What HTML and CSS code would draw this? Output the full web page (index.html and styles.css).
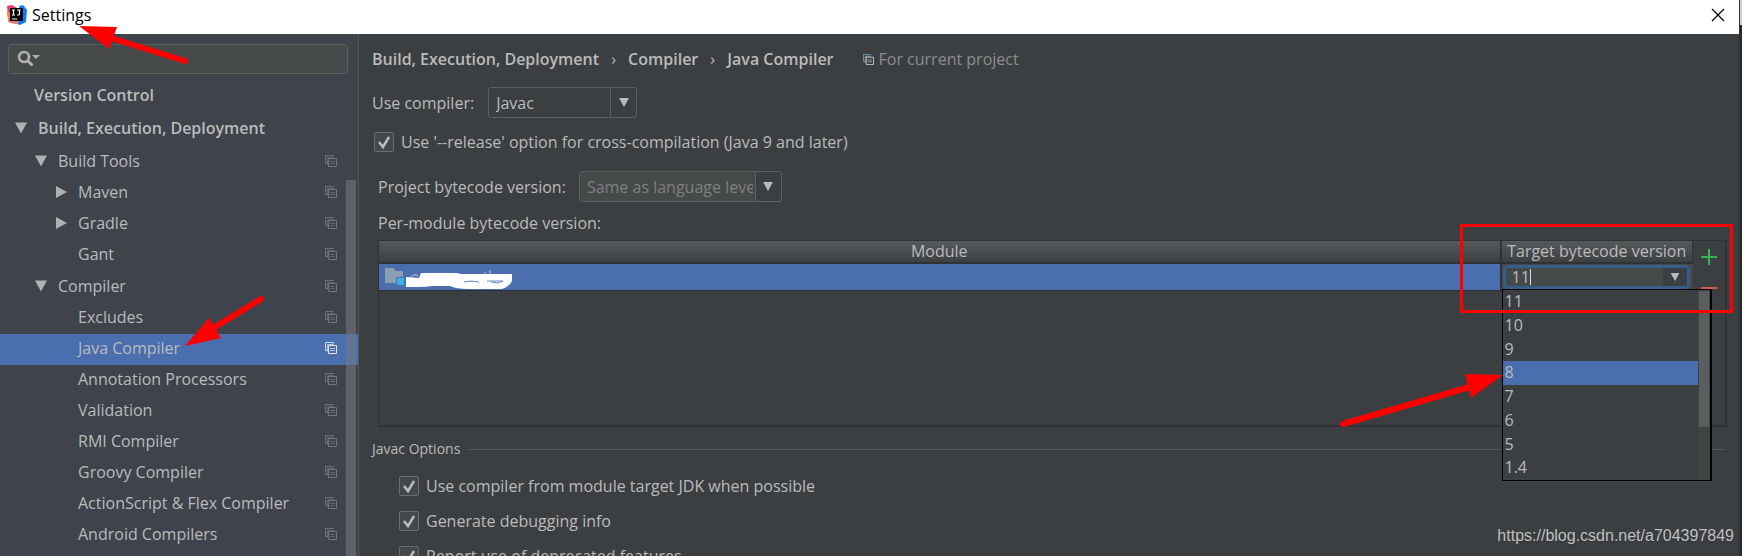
FILE: index.html
```html
<!DOCTYPE html>
<html lang="en">
<head>
<meta charset="utf-8">
<title>Settings</title>
<link rel="stylesheet" href="styles.css">
</head>
<body>
<svg class="defs" aria-hidden="true">
  <symbol id="copy" viewBox="0 0 12 12"><path d="M2.5 8.5H.5V.5h8v1" fill="none" stroke="var(--back)"/><path d="M3.5 3.5h8v8h-8z" fill="none" stroke="currentColor"/><path d="M2.5 2.5v7M2.5 2.5h6M5 6.5h5M5 8.5h5" stroke="currentColor" stroke-opacity=".7"/></symbol>
  <symbol id="down" viewBox="0 0 12 11"><path d="M0 0h12L6 11z" fill="currentColor"/></symbol>
  <symbol id="right" viewBox="0 0 12 12"><path d="M1 0l11 6-11 6z" fill="currentColor"/></symbol>
</svg>
<div class="screen">
  <div class="window">
    <header class="titlebar">
      <svg class="logo" viewBox="0 0 20 20" aria-hidden="true">
        <path d="M1 1l9 2-2 16-7-2 1-5-2-3z" fill="#f7577c"/><path d="M0 8l5-1v7l-4 1z" fill="#f98a3c"/><path d="M0 1l5-1 5 3v4H1z" fill="#ec3b6b"/>
        <path d="M12 1l4-1 4 5-1 12-6 3-6-2 7-4z" fill="#087cfa"/><path d="M2 17l2-2h8l-1 4z" fill="#fa7a62"/>
        <path d="M3 3h13v13H3z" fill="#000"/><path d="M5 5h3M6.500 5v5M5 10h3M10 5h3.500M12.500 5v4q0 1-1 1H10M5 14h5" fill="none" stroke="#fff" stroke-width="1.200"/>
      </svg>
      <h1 class="title">Settings</h1>
      <button class="close" aria-label="Close"><svg viewBox="0 0 12 12"><path d="M0 0l12 12M12 0L0 12" stroke="#000" stroke-width="1.200"/></svg></button>
    </header>
    <div class="body">
      <nav class="sidebar" aria-label="Settings sections">
        <div class="search">
          <svg class="lens" viewBox="0 0 24 16" aria-hidden="true"><circle cx="7" cy="7" r="5" fill="none" stroke="currentColor" stroke-width="2.600"/><path d="M10.500 10.500l5 5" stroke="currentColor" stroke-width="3"/><path d="M15 5h8l-4 4z" fill="currentColor"/></svg>
          <input class="search-input" type="text" aria-label="Search settings">
        </div>
        <ul class="tree">
          <li class="row top plain">Version Control</li>
          <li class="row top"><svg class="arrow"><use href="#down"/></svg>Build, Execution, Deployment</li>
          <li class="row group"><svg class="arrow"><use href="#down"/></svg>Build Tools<svg class="copy"><use href="#copy"/></svg></li>
          <li class="row leaf"><svg class="arrow"><use href="#right"/></svg>Maven<svg class="copy"><use href="#copy"/></svg></li>
          <li class="row leaf"><svg class="arrow"><use href="#right"/></svg>Gradle<svg class="copy"><use href="#copy"/></svg></li>
          <li class="row leaf plain">Gant<svg class="copy"><use href="#copy"/></svg></li>
          <li class="row group"><svg class="arrow"><use href="#down"/></svg>Compiler<svg class="copy"><use href="#copy"/></svg></li>
          <li class="row leaf plain">Excludes<svg class="copy"><use href="#copy"/></svg></li>
          <li class="row leaf plain selected">Java Compiler<svg class="copy"><use href="#copy"/></svg></li>
          <li class="row leaf plain">Annotation Processors<svg class="copy"><use href="#copy"/></svg></li>
          <li class="row leaf plain">Validation<svg class="copy"><use href="#copy"/></svg></li>
          <li class="row leaf plain">RMI Compiler<svg class="copy"><use href="#copy"/></svg></li>
          <li class="row leaf plain">Groovy Compiler<svg class="copy"><use href="#copy"/></svg></li>
          <li class="row leaf plain">ActionScript &amp; Flex Compiler<svg class="copy"><use href="#copy"/></svg></li>
          <li class="row leaf plain">Android Compilers<svg class="copy"><use href="#copy"/></svg></li>
        </ul>
        <div class="tree-thumb"></div>
      </nav>
      <main class="content">
        <div class="crumbs">
          <span>Build, Execution, Deployment</span><span class="sep">›</span><span>Compiler</span><span class="sep">›</span><span>Java Compiler</span>
          <span class="scope"><svg class="copy"><use href="#copy"/></svg>For current project</span>
        </div>
        <div class="field compiler">
          <label for="compiler">Use compiler:</label>
          <div class="combo"><select id="compiler"><option>Javac</option></select><span class="combo-button"><svg><use href="#down"/></svg></span></div>
        </div>
        <label class="check release"><input type="checkbox" checked>Use '--release' option for cross-compilation (Java 9 and later)</label>
        <div class="field bytecode">
          <label for="bytecode">Project bytecode version:</label>
          <div class="combo wide"><input id="bytecode" type="text" placeholder="Same as language level"><span class="combo-button"><svg><use href="#down"/></svg></span></div>
        </div>
        <p class="caption">Per-module bytecode version:</p>
        <div class="modules">
          <table class="grid">
            <thead><tr><th>Module</th><th class="target">Target bytecode version</th></tr></thead>
            <tbody><tr>
              <td class="module"><svg class="folder" viewBox="0 0 128 26" aria-hidden="true"><path d="M0 4h8l3 3h7v12H0z" fill="#8c9eb3"/><path d="M11 13h9v9h-9z" fill="#4b6eaf"/><path d="M12 14h7v7h-7z" fill="#40b0e0"/><path d="M26 13q3-4 7-1M99 9h2M104 7h1v4" fill="none" stroke="#c5cad2"/><path d="M21 13l13 1 2-5h36l4 1h51v7q-3 6-10 8H84q-13 0-19-3H48q-7 1-15 1H21z" fill="#fff"/><path d="M79 18l7-1 8 1M102 17h16l-5 2-7-1" fill="none" stroke="#6c87b9"/></svg></td>
              <td class="editor"><div class="cell-combo"><input type="text" value="11" aria-label="Target bytecode version"><span class="caret"></span><button aria-label="Show versions"><svg><use href="#down"/></svg></button></div>
                <div class="popup"><ul class="versions" role="listbox"><li>11</li><li>10</li><li>9</li><li class="selected">8</li><li>7</li><li>6</li><li>5</li><li>1.4</li></ul><div class="popup-bar"></div></div>
              </td>
            </tr></tbody>
          </table>
          <div class="tools">
            <button aria-label="Add"><svg viewBox="0 0 16 16"><path d="M8 0v16M0 8h16" stroke="#36b24e" stroke-width="2"/></svg></button>
            <button aria-label="Remove"><svg viewBox="0 0 16 16"><path d="M0 8h16" stroke="#d6584b" stroke-width="2"/></svg></button>
          </div>
        </div>
        <fieldset class="options">
          <legend>Javac Options</legend>
          <label class="check"><input type="checkbox" checked>Use compiler from module target JDK when possible</label>
          <label class="check"><input type="checkbox" checked>Generate debugging info</label>
          <label class="check"><input type="checkbox" checked>Report use of deprecated features</label>
        </fieldset>
      </main>
    </div>
  </div>
  <div class="behind"></div>
  <svg class="marks" viewBox="0 0 1742 556" aria-hidden="true">
    <g fill="red" stroke="none"><path d="M79 26l38 1-8 22z"/><path d="M185 346l24-28 12 20z"/><path d="M1503 375l-38-1 6 24z"/></g>
    <g stroke="red" stroke-width="6" stroke-linecap="round"><path d="M185 61l-74-23M261 299l-51 31M1343 424l130-38"/></g>
    <path d="M1461.500 225.500h270v86h-270z" fill="none" stroke="red" stroke-width="3"/>
  </svg>
  <div class="watermark">https://blog.csdn.net/a704397849</div>
</div>
</body>
</html>
```
FILE: styles.css
```css
* { box-sizing: border-box; }
body { margin: 0; font: 16px/24px "Open Sans", "Noto Sans", sans-serif; color: #bbb; background: #3c3f41; }
button, input, select { font: inherit; color: inherit; margin: 0; padding: 0; border: 0; background: none; border-radius: 0; outline: 0; }
ul { list-style: none; margin: 0; padding: 0; }
svg { display: block; flex: none; }
.defs { position: absolute; width: 0; height: 0; }
.screen { position: relative; display: flex; height: 100vh; overflow: hidden; }
.window { flex: 1; min-width: 0; display: flex; flex-direction: column; }
.behind { width: 3px; background: linear-gradient(#d0d0d0 25px, #2b2b2b 25px); border-left: 1px solid #303234; }

.titlebar { flex: none; display: flex; align-items: center; height: 34px; padding: 0 15px 4px 7px; background: #fff; color: #000; }
.logo { width: 20px; height: 20px; }
.title { flex: 1; margin: 0 0 0 5px; font-size: 16px; font-weight: 400; }
.close svg { width: 12px; height: 12px; overflow: visible; }

.body { flex: 1; min-height: 0; display: flex; }
.sidebar { position: relative; flex: none; width: 359px; background: #3e434c; border-right: 1px solid #555; overflow: hidden; }
.search { display: flex; align-items: center; height: 30px; margin: 10px 10px 6px 8px; padding: 0 0 3px 8px; background: #45494a; border: 1px solid #5e6060; border-radius: 4px; }
.lens { width: 24px; height: 16px; color: #b0b0b0; }
.search-input { flex: 1; min-width: 0; }
.row { display: flex; align-items: center; gap: 11px; height: 31px; padding: 0 21px 3px 55px; --back: #687580; }
.row.leaf.plain { padding-left: 78px; }
.row.group { height: 32px; padding-left: 35px; }
.row.top { height: 33px; padding-left: 15px; font-weight: 600; }
.row.top.plain { padding-left: 34px; }
.arrow { width: 12px; height: 12px; color: #b0b0b0; }
.copy { width: 12px; height: 12px; color: #747678; }
.row .copy { margin-left: auto; }
.row.selected { background: #4b6eaf; --back: #b9dcf2; }
.row.selected .copy { color: #e4e4e4; }
.tree-thumb { position: absolute; top: 146px; right: 2px; bottom: 0; width: 10px; background: rgba(120, 122, 130, .55); }

.content { flex: 1; min-width: 0; padding: 13px 13px 0 13px; }
.crumbs { display: flex; align-items: center; font-weight: 600; }
.sep { width: 29px; text-align: center; font-weight: 400; }
.scope { display: flex; align-items: center; gap: 5px; margin-left: 29px; font-weight: 400; color: #8b8d8e; }
.scope .copy { width: 11px; height: 11px; color: #c0c2c4; --back: #5c9fc4; }
.field { display: flex; align-items: center; }
.compiler { gap: 14px; margin-top: 16px; }
.bytecode { gap: 13px; margin: 12px 0 0 6px; }
.combo { display: flex; width: 149px; height: 31px; border: 1px solid #5e6060; border-radius: 3px; }
.combo select, .combo input { flex: 1; min-width: 0; padding: 0 2px 0 7px; appearance: none; }
.combo.wide { width: 203px; }
.combo.wide input { background: #45494a; }
.combo input::placeholder { color: #808080; opacity: 1; }
.combo-button { display: flex; align-items: center; justify-content: center; width: 26px; border-left: 1px solid #5e6060; }
.combo-button svg { width: 10px; height: 9px; }
.check { display: flex; align-items: center; gap: 7px; height: 35px; }
.check input { appearance: none; width: 20px; height: 20px; border: 1px solid #6b6d6d; border-radius: 2px; background: #43494a url("data:image/svg+xml,%3Csvg xmlns='http://www.w3.org/2000/svg' viewBox='0 0 18 18'%3E%3Cpath d='M4 9l4 5 6-10' fill='none' stroke='%23bbb' stroke-width='2.500'/%3E%3C/svg%3E"); }
.release { margin: 6px 0 0 2px; }
.caption { margin: 9px 0 5px 6px; }

.modules { display: flex; height: 187px; margin-left: 6px; margin-right: -1px; border: 1px solid #323232; border-right-width: 2px; border-bottom-width: 2px; }
.grid { flex: 1; height: 48px; border-collapse: collapse; table-layout: fixed; }
.grid th { height: 21px; padding: 0; font-weight: 400; line-height: 21px; background: linear-gradient(#565a5c, #3d4042); border-bottom: 2px solid #323232; }
.grid .target { width: 192px; border-left: 2px solid #323232; border-right: 1px solid #323232; }
.grid td { height: 27px; padding: 0; border-bottom: 1px solid #28303e; }
.module { background: #4b6eaf; }
.folder { width: 128px; height: 26px; margin-left: 6px; }
.editor { position: relative; border-left: 2px solid #323232; background: #45494a; }
.cell-combo { display: flex; align-items: center; height: 24px; margin: 0 3px 0 1px; border: 3px solid #345f8a; border-radius: 5px; }
.cell-combo input { width: 24px; padding-left: 6px; }
.caret { width: 1px; height: 16px; background: #ddd; }
.cell-combo button { display: flex; align-items: center; justify-content: center; align-self: stretch; width: 24px; margin-left: auto; background: #3c3f41; }
.cell-combo svg { width: 10px; height: 8px; }
.popup { position: absolute; z-index: 2; top: 25px; left: 0; display: flex; width: 210px; height: 192px; border: 1px solid #000; border-right-width: 2px; background: #3c3f41; }
.versions { flex: 1; display: grid; grid-auto-rows: 1fr; }
.versions li { min-height: 0; line-height: 23px; padding-left: 2px; }
.versions .selected { background: #4b6eaf; }
.popup-bar { width: 12px; padding: 1px; background: linear-gradient(#5b5e5f, #5b5e5f) 1px 1px / 10px 136px no-repeat #414445; }
.tools { width: 32px; padding: 8px 0 0 8px; }
.tools button { display: block; margin-bottom: 15px; }
.tools svg { width: 16px; height: 16px; }

.options { min-width: 0; margin: 10px 0 0; padding: 7px 0 0 27px; border: 0; border-top: 1px solid #555; }
.options legend { margin-left: -27px; padding: 0 7px 0 0; font-size: 14px; }
.marks { position: absolute; z-index: 3; top: 0; left: 0; width: 1742px; height: 556px; pointer-events: none; }
.watermark { position: absolute; z-index: 3; right: 8px; bottom: 8px; font: 16px/24px "Liberation Sans", sans-serif; color: #c0c1c2; text-shadow: 0 1px 1px #333; }
```
